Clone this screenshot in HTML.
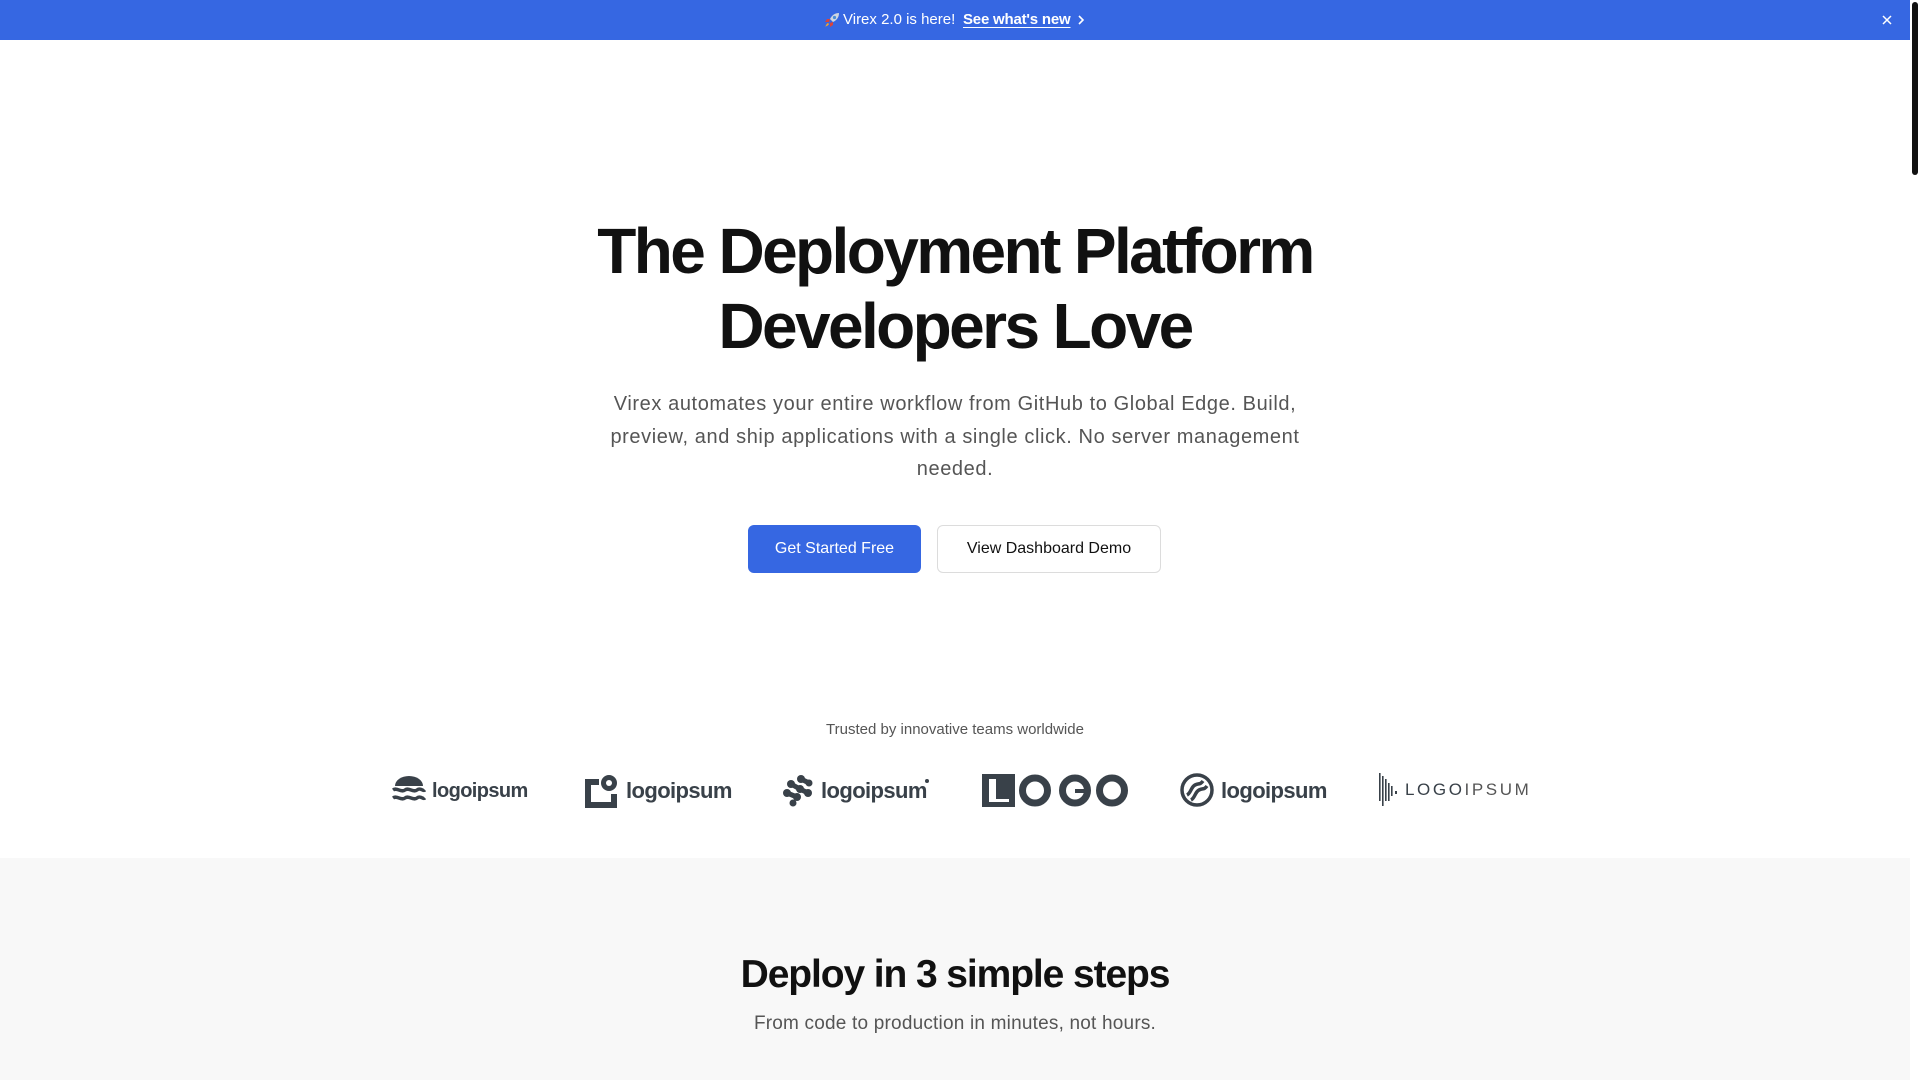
<!DOCTYPE html>
<html><head><meta charset="utf-8">
<style>
*{margin:0;padding:0;box-sizing:border-box}
html,body{width:1920px;height:1080px;overflow:hidden;background:#fff;font-family:"Liberation Sans",Arial,sans-serif}
.abs{position:absolute}
.banner{left:0;top:0;width:1910px;height:40px;background:#3667e2;color:#fff;font-size:15px}
.c{left:0;width:1910px;text-align:center;white-space:nowrap}
h1{font-size:64px;font-weight:700;letter-spacing:-2.6px;color:#111;line-height:75px}
.p{font-size:20px;line-height:32.5px;color:#555;letter-spacing:0.6px}
.btn{height:48px;border-radius:6px;font-size:16px;display:flex;align-items:center;justify-content:center}
.logo{fill:#394149;color:#394149}
.lt{font-weight:700;font-size:22px;letter-spacing:-0.6px;color:#394149;line-height:1}
</style></head><body>
<div class="abs banner">
  <svg class="abs" style="left:823px;top:11px" width="18" height="18" viewBox="0 0 18 18"><path d="M16 2c-4 0-7 2-9 6l3 3c4-2 6-5 6-9z" fill="#cfd6e0"/><circle cx="11.5" cy="6.5" r="1.6" fill="#4a8fd8"/><path d="M7 8L4 8 2 11l4 0z M10 11l0 3-3 2 0-4z" fill="#d9433b"/><path d="M5 12c-2 1-2 3-3 4 1-1 3-1 4-3z" fill="#f4a62a"/></svg>
  <div class="abs" style="left:843px;top:11px;font-size:15px;line-height:18px">Virex 2.0 is here!</div>
  <div class="abs" style="left:963px;top:11px;font-size:15px;line-height:18px;font-weight:700;text-decoration:underline;text-underline-offset:3px;letter-spacing:-0.2px">See what's new</div>
  <svg class="abs" style="left:1076px;top:14px" width="10" height="12" viewBox="0 0 10 12"><path d="M3 2l4 4-4 4" stroke="#fff" stroke-width="1.6" fill="none"/></svg>
  <svg class="abs" style="left:1882px;top:15px" width="10" height="10" viewBox="0 0 10 10"><path d="M1 1l8 8M9 1l-8 8" stroke="#fff" stroke-width="1.5"/></svg>
</div>
<div class="abs" style="left:1912px;top:2px;width:6px;height:173px;background:#111;border-radius:3px"></div>

<h1 class="abs c" style="top:214px">The Deployment Platform</h1>
<h1 class="abs c" style="top:289px">Developers Love</h1>

<div class="abs c p" style="top:388px">Virex automates your entire workflow from GitHub to Global Edge. Build,<br>preview, and ship applications with a single click. No server management<br>needed.</div>

<div class="abs btn" style="left:748px;top:525px;width:173px;background:#3667e2;color:#fff">Get Started Free</div>
<div class="abs btn" style="left:937px;top:525px;width:224px;border:1px solid #dcdcdc;color:#111;font-weight:500">View Dashboard Demo</div>

<div class="abs c" style="top:721px;font-size:15px;color:#555;line-height:18px">Trusted by innovative teams worldwide</div>

<svg class="abs logo" style="left:392px;top:776px" width="34" height="28" viewBox="0 0 34 28"><path d="M3 10a14 10 0 0 1 28 0z"/><path d="M1 14c4-3 8 3 12 0s8 3 12 0 6 2 8 0" stroke="#394149" stroke-width="3.4" fill="none"/><path d="M1 22c4-3 8 3 12 0s8 3 12 0 6 2 8 0" stroke="#394149" stroke-width="3.4" fill="none"/></svg>
<div class="abs lt" style="left:432px;top:781px;font-size:20px">logoipsum</div>
<svg class="abs logo" style="left:585px;top:773px" width="34" height="35" viewBox="0 0 34 35"><path d="M0 6h14v6H6v17h20v-8h6v14H0z"/><circle cx="24" cy="10" r="8"/><circle cx="24" cy="10" r="3" fill="#fff"/></svg>
<div class="abs lt" style="left:626px;top:780px">logoipsum</div>
<svg class="abs logo" style="left:783px;top:775px" width="30" height="32" viewBox="0 0 30 32"><circle cx="18" cy="4" r="4"/><circle cx="26" cy="8" r="3.5"/><circle cx="8" cy="9" r="4"/><circle cx="17" cy="14" r="4"/><circle cx="4" cy="18" r="4"/><circle cx="25" cy="18" r="4"/><circle cx="14" cy="22" r="4"/><circle cx="10" cy="28" r="3.5"/><path d="M8 9l9 5 8 4M4 18l10 4M18 4l8 4" stroke="#394149" stroke-width="5"/></svg>
<div class="abs lt" style="left:821px;top:780px">logoipsum</div>
<div class="abs" style="left:925px;top:779px;width:4px;height:4px;border-radius:2px;background:#394149"></div>
<svg class="abs logo" style="left:982px;top:774px" width="146" height="33" viewBox="0 0 146 33"><path d="M0 0h33v33H0z"/><path d="M7 5h7v20h13v3H7z" fill="#fff"/><circle cx="53" cy="16.5" r="12.5" fill="none" stroke="#394149" stroke-width="7"/><circle cx="93" cy="16.5" r="12.5" fill="none" stroke="#394149" stroke-width="7"/><path d="M93 15h10v4H93z"/><circle cx="130" cy="16.5" r="12.5" fill="none" stroke="#394149" stroke-width="7"/></svg>
<svg class="abs logo" style="left:1180px;top:773px" width="34" height="34" viewBox="0 0 34 34"><circle cx="17" cy="17" r="15" fill="none" stroke="#394149" stroke-width="3.5"/><path d="M7 22c4-2 4-8 8-10s5 0 8-4M11 27c4-2 4-8 8-10s5 0 8-4" stroke="#394149" stroke-width="3.5" fill="none"/></svg>
<div class="abs lt" style="left:1221px;top:780px">logoipsum</div>
<svg class="abs logo" style="left:1379px;top:773px" width="20" height="34" viewBox="0 0 20 34"><rect x="0" y="0" width="1.6" height="28"/><rect x="3" y="3" width="1.6" height="30"/><rect x="6" y="6" width="1.6" height="22"/><rect x="9" y="10" width="1.6" height="18"/><rect x="12" y="13" width="1.6" height="10"/><rect x="16" y="18" width="2" height="3"/></svg>
<div class="abs" style="left:1405px;top:781px;font-size:17px;letter-spacing:2.6px;color:#394149;line-height:1">LOGO<span style="font-weight:300;color:#555">IPSUM</span></div>

<div class="abs" style="left:0;top:858px;width:1910px;height:222px;background:#f8f8f8"></div>
<div class="abs c" style="top:952px;font-size:39px;font-weight:700;letter-spacing:-1.1px;color:#111;line-height:46px">Deploy in 3 simple steps</div>
<div class="abs c" style="top:1012px;font-size:19px;color:#555;line-height:24px;letter-spacing:0.2px">From code to production in minutes, not hours.</div>
</body></html>
